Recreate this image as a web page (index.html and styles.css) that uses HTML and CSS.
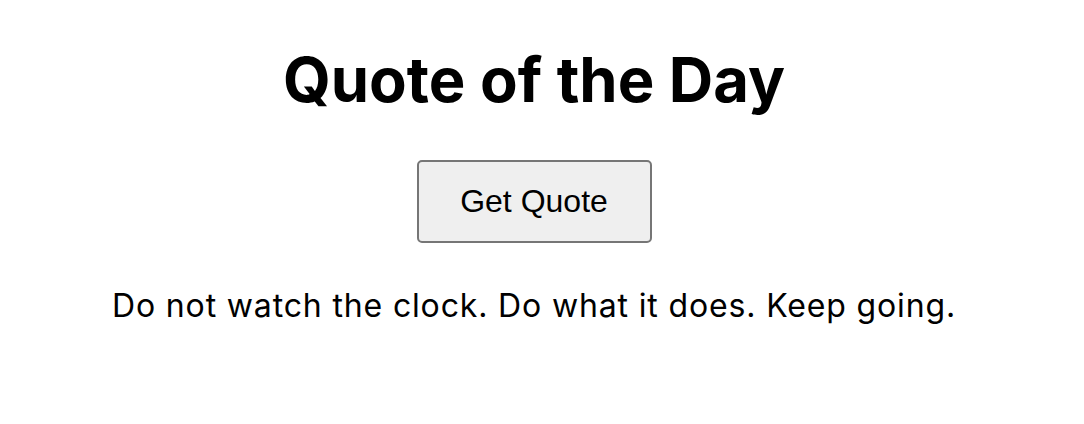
FILE: index.html
```html
<!DOCTYPE html>
<html>
<head>
<meta charset="utf-8">
<link rel="stylesheet" href="styles.css">
</head>
<body>
<main class="app">
  <h1 class="title">Quote of the Day</h1>
  <button class="quote-btn">Get Quote</button>
  <p class="quote">Do not watch the clock. Do what it does. Keep going.</p>
</main>
</body>
</html>
```
FILE: styles.css
```css
html, body {
  margin: 0;
  padding: 0;
  background: #ffffff;
}
.app {
  display: flex;
  flex-direction: column;
  align-items: center;
  font-family: Inter, "Liberation Sans", sans-serif;
  color: #000;
  padding: 40px 16px 0 0;
}
.title {
  margin: 0;
  font-size: 61.5px;
  font-weight: 700;
  line-height: 80px;
}
.quote-btn {
  margin-top: 40px;
  width: 235px;
  height: 83px;
  font-family: "Liberation Sans", Arial, sans-serif;
  font-size: 32px;
  color: #000;
  background: #efefef;
  border: 2px solid #767676;
  border-radius: 5px;
  padding: 0;
}
.quote {
  margin: 43px 0 0;
  font-size: 32px;
  letter-spacing: 0.85px;
  line-height: 40px;
}
```
